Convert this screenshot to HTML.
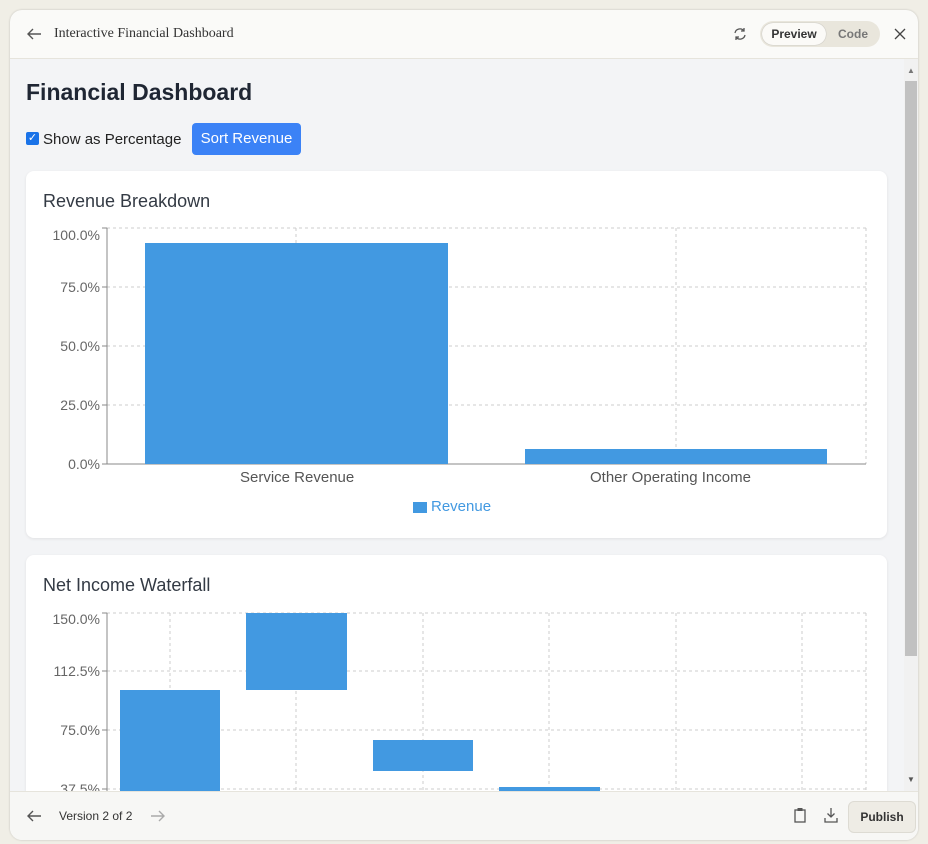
<!DOCTYPE html>
<html><head><style>
body{margin:0;width:928px;height:844px;background:#f0eee6;font-family:"Liberation Sans",sans-serif;overflow:hidden;position:relative}
.win{position:absolute;left:10px;top:10px;width:908px;height:830px;background:#fafaf8;border-radius:12px;box-shadow:0 0 2px rgba(0,0,0,.2);overflow:hidden}
.hdr{position:absolute;left:0;top:0;width:908px;height:48px;border-bottom:1px solid #e6e4dc}
.content{position:absolute;left:0;top:49px;width:894px;height:732px;background:#f3f4f6;overflow:hidden}
.sb{position:absolute;left:894px;top:49px;width:14px;height:732px;background:#f1f1f1}
.ftr{position:absolute;left:0;top:781px;width:908px;height:49px;background:#f7f7f5;border-top:1px solid #e6e4dc}
.card{position:absolute;left:16px;width:861px;background:#fff;border-radius:8px;box-shadow:0 1px 3px rgba(0,0,0,.08);overflow:hidden}
.ct{position:absolute;left:17px;font-size:18px;color:#333a44}
.yl{position:absolute;font-size:14px;color:#666;text-align:right;width:60px}
.bar{position:absolute;background:#4299e1}
</style></head><body>
<div class="win">
 <div class="hdr">
  <svg style="position:absolute;left:16px;top:17px" width="16" height="14"><path d="M15 7H2M7 2L2 7l5 5" stroke="#555" stroke-width="1.4" fill="none"/></svg>
  <div style="position:absolute;left:44px;top:16px;font-family:'Liberation Serif',serif;font-size:14px;color:#333">Interactive Financial Dashboard</div>
  <svg style="position:absolute;left:722px;top:16px" width="16" height="16"><path d="M3 7a5 5 0 0 1 9-2M13 9a5 5 0 0 1-9 2M12 2v3h-3M4 14v-3h3" stroke="#555" stroke-width="1.3" fill="none"/></svg>
  <div style="position:absolute;left:750px;top:11px;width:120px;height:26px;background:#e9e6dc;border-radius:13px"></div>
  <div style="position:absolute;left:752px;top:13px;width:64px;height:22px;background:#fbfaf7;border-radius:11px;box-shadow:0 0 1px #999;font-size:12px;font-weight:bold;color:#333;text-align:center;line-height:22px">Preview</div>
  <div style="position:absolute;left:828px;top:17px;font-size:12px;font-weight:bold;color:#777">Code</div>
  <svg style="position:absolute;left:884px;top:18px" width="12" height="12"><path d="M1 1l10 10M11 1L1 11" stroke="#444" stroke-width="1.3"/></svg>
 </div>
 <div class="content">
  <div style="position:absolute;left:16px;top:20px;font-size:23px;font-weight:bold;color:#1f2633">Financial Dashboard</div>
  <div style="position:absolute;left:16px;top:73px;width:13px;height:13px;background:#1a73e8;border-radius:2px;color:#fff;font-size:11px;line-height:13px;text-align:center">✓</div>
  <div style="position:absolute;left:33px;top:72px;font-size:15px;color:#222">Show as Percentage</div>
  <div style="position:absolute;left:182px;top:64px;width:109px;height:32px;background:#3b82f6;border-radius:4px;color:#fff;font-size:15px;line-height:32px;text-align:center">Sort Revenue</div>

  <div class="card" style="top:112px;height:367px">
   <div class="ct" style="top:20px">Revenue Breakdown</div>
   <svg style="position:absolute;left:0;top:0" width="861" height="367">
    <g stroke="#ccc" stroke-dasharray="3,3" fill="none">
     <path d="M81 57H840M81 116H840M81 175H840M81 234H840M270 57V293M650 57V293M840 57V293"/>
    </g>
    <path d="M81 57V293H840" stroke="#888" fill="none"/>
    <path d="M76 57h5M76 116h5M76 175h5M76 234h5M76 293h5" stroke="#888"/>
   </svg>
   <div class="yl" style="left:14px;top:56px">100.0%</div>
   <div class="yl" style="left:14px;top:108px">75.0%</div>
   <div class="yl" style="left:14px;top:167px">50.0%</div>
   <div class="yl" style="left:14px;top:226px">25.0%</div>
   <div class="yl" style="left:14px;top:285px">0.0%</div>
   <div class="bar" style="left:119px;top:72px;width:303px;height:221px"></div>
   <div class="bar" style="left:499px;top:278px;width:302px;height:15px"></div>
   <div style="position:absolute;left:214px;top:298px;font-size:15px;color:#555">Service Revenue</div>
   <div style="position:absolute;left:564px;top:298px;font-size:15px;color:#555">Other Operating Income</div>
   <div style="position:absolute;left:387px;top:331px;width:14px;height:11px;background:#4299e1"></div>
   <div style="position:absolute;left:405px;top:327px;font-size:15px;color:#4299e1">Revenue</div>
  </div>

  <div class="card" style="top:496px;height:300px">
   <div class="ct" style="top:20px">Net Income Waterfall</div>
   <svg style="position:absolute;left:0;top:0" width="861" height="300">
    <g stroke="#ccc" stroke-dasharray="3,3" fill="none">
     <path d="M81 58H840M81 116H840M81 175H840M81 234H840M144 58V300M270 58V300M397 58V300M523 58V300M650 58V300M776 58V300M840 58V300"/>
    </g>
    <path d="M81 58V300" stroke="#888" fill="none"/>
    <path d="M76 58h5M76 116h5M76 175h5M76 234h5" stroke="#888"/>
   </svg>
   <div class="yl" style="left:14px;top:56px">150.0%</div>
   <div class="yl" style="left:14px;top:108px">112.5%</div>
   <div class="yl" style="left:14px;top:167px">75.0%</div>
   <div class="yl" style="left:14px;top:226px">37.5%</div>
   <div class="bar" style="left:94px;top:135px;width:100px;height:165px"></div>
   <div class="bar" style="left:220px;top:58px;width:101px;height:77px"></div>
   <div class="bar" style="left:347px;top:185px;width:100px;height:31px"></div>
   <div class="bar" style="left:473px;top:232px;width:101px;height:60px"></div>
  </div>
 </div>
 <div class="sb">
  <div style="position:absolute;left:1px;top:22px;width:12px;height:575px;background:#c1c1c1"></div>
  <div style="position:absolute;left:3px;top:7px;font-size:8px;color:#777">▲</div>
  <div style="position:absolute;left:3px;top:716px;font-size:8px;color:#555">▼</div>
 </div>
 <div class="ftr">
  <svg style="position:absolute;left:16px;top:17px" width="16" height="14"><path d="M15 7H2M7 2L2 7l5 5" stroke="#555" stroke-width="1.4" fill="none"/></svg>
  <div style="position:absolute;left:49px;top:17px;font-size:12px;color:#333">Version 2 of 2</div>
  <svg style="position:absolute;left:140px;top:17px" width="16" height="14"><path d="M1 7h13M9 2l5 5-5 5" stroke="#aaa" stroke-width="1.4" fill="none"/></svg>
  <svg style="position:absolute;left:783px;top:15px" width="14" height="16"><rect x="2" y="3" width="10" height="12" stroke="#555" fill="none" stroke-width="1.3"/><rect x="4.5" y="1" width="5" height="3" fill="#555"/></svg>
  <svg style="position:absolute;left:814px;top:15px" width="14" height="16"><path d="M7 1v9M3.5 6.5L7 10l3.5-3.5M1 11v4h12v-4" stroke="#555" fill="none" stroke-width="1.3"/></svg>
  <div style="position:absolute;left:838px;top:9px;width:66px;height:30px;background:#eeece5;border:1px solid #dddbd3;border-radius:6px;font-size:12px;font-weight:bold;color:#333;line-height:30px;text-align:center">Publish</div>
 </div>
</div>
</body></html>
